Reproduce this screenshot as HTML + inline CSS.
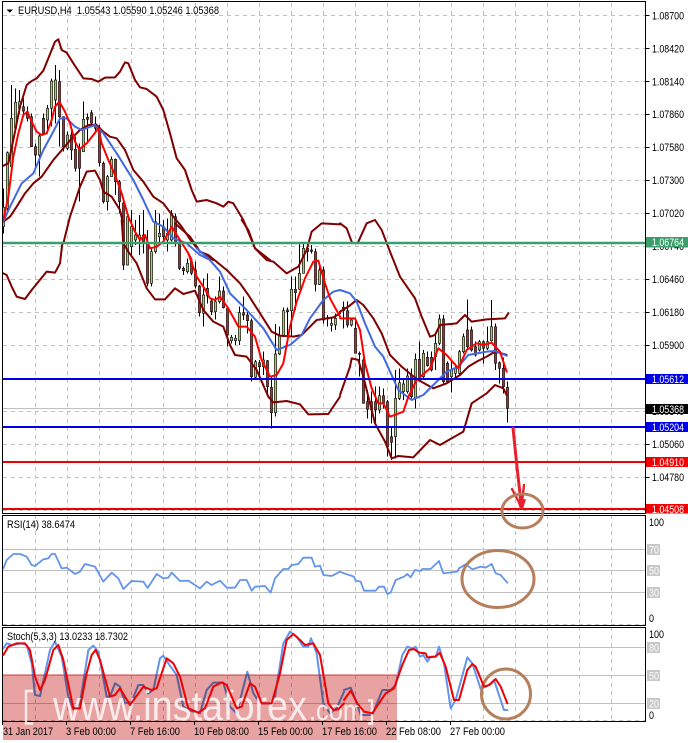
<!DOCTYPE html>
<html><head><meta charset="utf-8"><style>
html,body{margin:0;padding:0;background:#fff;width:688px;height:743px;overflow:hidden}
svg{display:block}
text{font-family:"Liberation Sans",sans-serif;font-size:11px;fill:#000}
.m{stroke-linejoin:round;stroke-linecap:round;fill:none}
.g{fill:#a6dc2e;stroke-width:2;shape-rendering:auto}
.r{fill:#e01818;stroke-width:2;shape-rendering:auto}
</style></head><body>
<svg width="688" height="743" viewBox="0 0 688 743" xmlns="http://www.w3.org/2000/svg">
<rect width="688" height="743" fill="#fff"/>
<!-- grid -->
<path fill="none" stroke="#c0c0c0" stroke-dasharray="4 4" d="M35.5 3V721M67.5 3V721M99.5 3V721M131.5 3V721M163.5 3V721M195.5 3V721M227.5 3V721M259.5 3V721M291.5 3V721M323.5 3V721M355.5 3V721M387.5 3V721M419.5 3V721M451.5 3V721M483.5 3V721M515.5 3V721M547.5 3V721M579.5 3V721M611.5 3V721"/>
<path fill="none" stroke="#c0c0c0" stroke-dasharray="4 4" d="M3 15.5H645M3 48.5H645M3 81.5H645M3 114.5H645M3 147.5H645M3 180.5H645M3 213.5H645M3 246.5H645M3 279.5H645M3 312.5H645M3 345.5H645M3 378.5H645M3 411.5H645M3 444.5H645M3 477.5H645M3 510.5H645M3 624.5H645M3 720.5H645"/>
<path fill="none" stroke="#c0c0c0" d="M3 408.5H645M3 549.5H645M3 570.5H645M3 592.5H645M3 647.5H645M3 675.5H645M3 703.5H645"/>
<!-- candles -->
<g shape-rendering="crispEdges">
<g transform="scale(.33333)" stroke="#000" stroke-width="3">
<path fill="none" d="M10.5 565V700M22.5 455V640M34.5 255V500M46.5 265V390M58.5 270V340M70.5 295V350M82.5 320V365M94.5 340V440M106.5 430V510M118.5 400V530M130.5 340V405M142.5 315V400M154.5 235V380M166.5 195V370M178.5 210V440M190.5 350V455M202.5 395V450M214.5 395V480M226.5 410V515M238.5 430V605M250.5 305V455M262.5 340V430M274.5 330V375M286.5 350V395M298.5 375V500M310.5 485V610M322.5 525V632M334.5 470V530M346.5 475V585M358.5 540V640"/>
<path class="g" d="M7.5 622h6v58h-6zM19.5 458h6v167h-6zM31.5 355h6v145h-6zM43.5 307h6v78h-6zM55.5 305h6v20h-6zM115.5 408h6v57h-6zM139.5 325h6v35h-6zM151.5 243h6v82h-6zM163.5 240h6v60h-6zM199.5 405h6v40h-6zM247.5 358h6v97h-6zM319.5 530h6v75h-6zM331.5 478h6v52h-6z"/>
<path class="r" d="M67.5 320h6v13h-6zM79.5 335h6v20h-6zM91.5 350h6v90h-6zM103.5 440h6v25h-6zM127.5 355h6v45h-6zM175.5 245h6v105h-6zM187.5 350h6v90h-6zM211.5 405h6v45h-6zM223.5 448h6v57h-6zM235.5 447h6v58h-6zM259.5 352h6v6h-6zM271.5 338h6v32h-6zM283.5 372h6v13h-6zM295.5 390h6v98h-6zM307.5 490h6v115h-6zM343.5 478h6v67h-6zM355.5 545h6v60h-6z"/>
</g>
<g transform="translate(0,220) scale(.33333)" stroke="#000" stroke-width="3">
<path fill="none" d="M370.5 -60V150M382.5 -25V135M394.5 -30V110M406.5 0V75M418.5 -15V105M430.5 -30V100M442.5 30V200M454.5 85V200M466.5 -30V100M478.5 -20V75M490.5 0V65M502.5 -5V95M514.5 -30V65M526.5 -20V80M538.5 60V150M550.5 140V165M562.5 115V160M574.5 115V165M586.5 125V205M598.5 195V290M610.5 175V320M622.5 160V250M634.5 235V285M646.5 230V298M658.5 170V250M670.5 200V265M682.5 260V380M694.5 345V370M706.5 345V375M718.5 260V375M730.5 230V300M742.5 270V340M754.5 295V485M766.5 420V480M778.5 420V475M790.5 395V465M802.5 420V530M814.5 470V625M826.5 312V590M838.5 320V405M850.5 262V350M862.5 262V355M874.5 170V350M886.5 170V270M898.5 70V210M910.5 70V160M922.5 70V125M934.5 75V100M946.5 85V215M958.5 135V195M970.5 140V310M982.5 285V320M994.5 295V335M1006.5 280V330"/>
<path class="g" d="M379.5 -10h6v145h-6zM391.5 20h6v60h-6zM403.5 45h6v15h-6zM415.5 45h6v10h-6zM451.5 95h6v95h-6zM463.5 5h6v90h-6zM475.5 40h6v10h-6zM499.5 40h6v20h-6zM511.5 -20h6v80h-6zM559.5 130h6v25h-6zM607.5 225h6v55h-6zM643.5 245h6v30h-6zM655.5 213h6v32h-6zM691.5 352h6v10h-6zM703.5 355h6v7h-6zM715.5 278h6v84h-6zM763.5 425h6v47h-6zM787.5 420h6v20h-6zM823.5 402h6v176h-6zM835.5 348h6v54h-6zM847.5 272h6v78h-6zM871.5 208h6v64h-6zM895.5 160h6v48h-6zM907.5 85h6v75h-6zM955.5 150h6v43h-6zM991.5 310h6v6h-6zM1003.5 295h6v20h-6z"/>
<path class="r" d="M367.5 -51h6v186h-6zM427.5 45h6v20h-6zM439.5 70h6v120h-6zM487.5 20h6v30h-6zM523.5 -10h6v80h-6zM535.5 70h6v75h-6zM547.5 145h6v7h-6zM571.5 125h6v35h-6zM583.5 150h6v48h-6zM595.5 198h6v80h-6zM619.5 205h6v23h-6zM631.5 243h6v32h-6zM667.5 213h6v50h-6zM679.5 265h6v80h-6zM727.5 278h6v7h-6zM739.5 285h6v17h-6zM751.5 302h6v168h-6zM775.5 428h6v12h-6zM799.5 422h6v78h-6zM811.5 502h6v76h-6zM859.5 270h6v5h-6zM883.5 208h6v10h-6zM919.5 85h6v10h-6zM931.5 90h6v4h-6zM943.5 95h6v98h-6zM967.5 150h6v150h-6zM979.5 293h6v4h-6z"/>
</g>
<g transform="translate(340,220) scale(.33333)" stroke="#000" stroke-width="3">
<path fill="none" d="M10.5 245V325M22.5 245V322M34.5 295V320M46.5 295V400M58.5 395V470M70.5 395V550M82.5 510V595M94.5 515V610M106.5 500V615M118.5 500V580M130.5 505V565M142.5 540V710M154.5 620V720M166.5 450V715M178.5 445V540M190.5 480V540M202.5 445V520M214.5 445V535M226.5 400V565M238.5 365V480M250.5 390V475M262.5 395V440M274.5 395V455M286.5 345V450M298.5 283V375M310.5 285V490M322.5 425V490M334.5 425V518M346.5 430V480M358.5 390V465M370.5 340V400M382.5 238V385M394.5 320V395M406.5 365V410M418.5 360V395M430.5 362V430M442.5 320V390M454.5 240V365M466.5 310V450M478.5 425V490M490.5 412V520M502.5 485V607"/>
<path class="g" d="M31.5 300h6v15h-6zM115.5 527h6v43h-6zM163.5 535h6v115h-6zM175.5 488h6v47h-6zM187.5 492h6v23h-6zM199.5 468h6v47h-6zM223.5 418h6v117h-6zM247.5 400h6v70h-6zM283.5 370h6v40h-6zM295.5 297h6v73h-6zM331.5 450h6v20h-6zM343.5 445h6v15h-6zM355.5 395h6v65h-6zM367.5 350h6v45h-6zM415.5 365h6v25h-6zM439.5 365h6v20h-6zM451.5 320h6v42h-6z"/>
<path class="r" d="M7.5 262h6v10h-6zM19.5 272h6v43h-6zM43.5 325h6v75h-6zM55.5 400h6v3h-6zM67.5 420h6v130h-6zM79.5 545h6v23h-6zM91.5 545h6v25h-6zM103.5 545h6v25h-6zM127.5 527h6v23h-6zM139.5 545h6v135h-6zM151.5 650h6v17h-6zM211.5 465h6v65h-6zM235.5 418h6v57h-6zM259.5 412h6v25h-6zM271.5 412h6v38h-6zM307.5 297h6v188h-6zM319.5 430h6v55h-6zM379.5 330h6v50h-6zM391.5 330h6v60h-6zM403.5 380h6v25h-6zM427.5 365h6v20h-6zM463.5 320h6v110h-6zM475.5 428h6v17h-6zM487.5 445h6v55h-6zM499.5 502h6v63h-6z"/>
</g>
</g>
<!-- bollinger -->
<g class="m" stroke="#800000" stroke-width="6" transform="scale(.33333)">
<path d="M10 497L25 490L40 420L60 320L80 255L95 243L110 235L130 212L145 175L165 125L175 118L185 150L200 158L220 190L250 235L275 237L295 245L315 233L345 232L360 215L375 187L385 190L405 240L420 262L440 267L470 290L490 330L510 400L530 475L555 510L575 570L590 605L620 600L650 610L670 620L685 605L700 610L730 660L765 745L810 780"/>
<path d="M10 665L30 650L50 620L75 580L100 550L125 530L160 480L190 445L215 415L240 390L265 375L290 375L310 395L330 410L350 415L375 450L400 510L430 545L460 590L490 610L520 650L545 680L575 725L600 755L640 780"/>
<path d="M190 730L210 650L240 560L260 515L285 512L300 540L310 575L335 590L360 630L368 665"/>
</g>
<g class="m" stroke="#800000" stroke-width="6" transform="translate(0,220) scale(.33333)">
<path d="M725 0L745 30L765 85L800 120L820 125L860 160L895 140L920 90L935 35L965 10L1020 13"/>
<path d="M525 10L570 50L600 95L625 105L680 150L720 190L745 225L780 280L815 335L840 347L880 350L905 345L925 325L950 300L1000 292L1020 280"/>
<path d="M10 160L20 165L35 200L50 230L75 237L95 210L140 155L165 158L180 130L187 70"/>
<path d="M365 0L370 70L385 95L410 130L440 205L465 238L495 238L525 205L550 222L585 212L610 270L640 305L670 320L690 375L705 405L740 410L770 450L805 530L820 547L860 543L900 553L925 583L985 582L1020 530"/>
</g>
<g class="m" stroke="#800000" stroke-width="6" transform="translate(340,220) scale(.33333)">
<path d="M0 10L20 25L35 65M55 65L80 10L105 0L125 30L150 95L180 170L225 235L245 290L270 350L285 345L300 315L350 310L375 285L395 305L440 298L495 295L505 280"/>
<path d="M0 275L25 260L50 240L70 255L100 295L125 340L150 405L185 440L215 465L235 480L280 505L320 490L360 465L385 440L410 425L440 410L460 398L475 397L500 405"/>
<path d="M0 525L30 440L35 415L55 420L70 470L105 610L135 665L155 715L175 708L220 712L270 660L300 675L370 635L395 550L440 520L465 495L490 505L500 525"/>
</g>
<!-- blue MA -->
<g class="m" stroke="#4169e1" stroke-width="6">
<path transform="scale(.33333)" d="M10 665L30 620L65 550L100 520L130 450L160 395L180 355L200 355L225 380L245 390L285 375L310 400L350 460L400 540L430 600L460 665L490 680L520 715L560 730L600 765L630 780"/>
<path transform="translate(0,220) scale(.33333)" d="M590 85L625 115L660 155L690 220L740 270L790 325L830 390L870 375L905 345L930 295L970 240L1000 215L1020 210"/>
<path transform="translate(340,220) scale(.33333)" d="M0 210L30 220L50 245L75 310L105 380L130 410L175 510L215 540L250 525L295 480L320 455L355 440L385 405L440 395L465 393L500 407"/>
</g>
<!-- red MA -->
<g class="m" stroke="#ff0000" stroke-width="6">
<path transform="scale(.33333)" d="M10 660L25 590L40 470L55 400L70 345L82 335L95 365L110 395L125 405L140 400L155 360L165 320L178 305L195 335L210 370L225 425L238 448L260 430L280 405L295 385L305 430L325 480L345 525L365 580L385 650L405 695L420 720L435 705L450 745L470 740L490 725L515 680L540 720L565 760L575 780"/>
<path transform="translate(0,220) scale(.33333)" d="M565 100L590 170L610 200L630 235L645 240L660 230L685 265L715 320L740 320L765 350L785 420L810 470L830 465L850 430L870 320L890 245L915 175L940 125L955 122L975 190L990 235L1020 290"/>
<path transform="translate(340,220) scale(.33333)" d="M0 295L45 295L60 330L75 430L95 505L115 550L130 550L150 590L190 575L205 530L230 480L270 445L295 385L320 405L355 445L380 390L410 370L430 375L455 368L480 395L500 455"/>
</g>
<!-- horizontal levels -->
<path fill="none" stroke="#3a9f6b" stroke-width="2.4" d="M3 243H646"/>
<path fill="none" stroke="#0000e6" stroke-width="2" d="M3 379H646M3 427H646"/>
<path fill="none" stroke="#f00000" stroke-width="2" d="M3 462H646M3 509H646"/>
<!-- arrow -->
<path class="m" stroke="#e8202e" stroke-width="3" d="M513 428L517 467L521.5 507"/>
<path class="m" stroke="#e8202e" stroke-width="2.4" d="M512 489L521.5 507L524 485"/>
<path fill="#e8202e" d="M517 500L526 499L523 509L520 509z"/>
<!-- RSI -->
<g class="m" stroke="#6495ed" stroke-width="5.4">
<path transform="translate(0,500) scale(.33333)" d="M10 205L20 180L40 162L60 162L80 170L95 195L105 198L130 178L145 175L155 162L165 162L185 205L200 203L225 222L240 215L255 192L285 200L310 245L335 218L355 235L370 267L395 243L430 245L443 264L470 222L490 235L505 233L515 218L540 243L565 242L600 265L620 245L635 255L660 242L680 263L705 263L720 240L740 240L755 272L765 260L795 258L812 278L825 235L850 207L865 207L875 195L895 192L910 173L935 173L945 200L960 197L970 225L995 228L1020 215L1032 220"/>
<path transform="translate(344,500) scale(.33333)" d="M0 220L30 230L35 242L50 245L60 272L95 272L105 260L120 260L130 282L140 278L155 240L180 230L190 222L200 232L213 210L230 213L235 207L260 207L285 183L298 220L340 215L345 205L365 193L385 208L410 200L425 203L443 192L455 220L470 225L490 248"/>
</g>
<!-- Stoch blue -->
<g class="m" stroke="#6495ed" stroke-width="6">
<path transform="translate(0,500) scale(.33333)" d="M10 445L20 430L35 435L65 430L80 435L95 490L105 585L120 588L135 520L150 450L165 425L185 470L205 590L220 628L240 610L265 450L280 437L295 455L320 590L330 590L345 550L360 560L375 610L395 605L415 555L430 555L445 580L460 570L480 475L490 467L505 490L530 525L550 620L570 632L600 640L620 570L640 548L670 548L690 620L710 640L742 515L760 580L780 610L810 610L825 590L850 430L870 395L890 410L910 440L925 440L933 415L950 460L970 610L990 640L1010 625L1032 575"/>
<path transform="translate(344,500) scale(.33333)" d="M0 570L20 563L35 600L50 645L85 645L115 570L140 570L155 555L175 465L190 440L205 445L215 440L228 470L238 465L250 485L260 470L275 470L285 440L300 490L320 625L335 600L370 472L385 490L410 567L440 553L450 540L480 630L490 630"/>
</g>
<!-- panel borders -->
<path fill="none" stroke="#000" d="M2.5 1.5H645.5V513.5H2.5ZM2.5 515.5H645.5V625.5H2.5ZM2.5 627.5H645.5V721.5H2.5Z"/>
<path fill="none" stroke="#000" d="M645.5 15.5h4M645.5 48.5h4M645.5 81.5h4M645.5 114.5h4M645.5 147.5h4M645.5 180.5h4M645.5 213.5h4M645.5 279.5h4M645.5 312.5h4M645.5 345.5h4M645.5 444.5h4M645.5 477.5h4M2.5 721V725M66.5 721V725M130.5 721V725M194.5 721V725M258.5 721V725M322.5 721V725M386.5 721V725M450.5 721V725"/>
<!-- price labels -->
<g>
<text x="652" y="19.5" textLength="32" lengthAdjust="spacingAndGlyphs">1.08700</text>
<text x="652" y="52.5" textLength="32" lengthAdjust="spacingAndGlyphs">1.08420</text>
<text x="652" y="85.5" textLength="32" lengthAdjust="spacingAndGlyphs">1.08140</text>
<text x="652" y="118" textLength="32" lengthAdjust="spacingAndGlyphs">1.07860</text>
<text x="652" y="151" textLength="32" lengthAdjust="spacingAndGlyphs">1.07580</text>
<text x="652" y="184" textLength="32" lengthAdjust="spacingAndGlyphs">1.07300</text>
<text x="652" y="217" textLength="32" lengthAdjust="spacingAndGlyphs">1.07020</text>
<text x="652" y="250" textLength="32" lengthAdjust="spacingAndGlyphs">1.06740</text>
<text x="652" y="283" textLength="32" lengthAdjust="spacingAndGlyphs">1.06460</text>
<text x="652" y="316" textLength="32" lengthAdjust="spacingAndGlyphs">1.06180</text>
<text x="652" y="349" textLength="32" lengthAdjust="spacingAndGlyphs">1.05900</text>
<text x="652" y="448" textLength="32" lengthAdjust="spacingAndGlyphs">1.05060</text>
<text x="652" y="481" textLength="32" lengthAdjust="spacingAndGlyphs">1.04780</text>
<text x="652" y="415" textLength="32" lengthAdjust="spacingAndGlyphs">1.05340</text>
<rect x="646" y="237" width="42" height="10.5" fill="#3a9f6b"/>
<text x="652" y="246" textLength="32" lengthAdjust="spacingAndGlyphs" style="fill:#fff">1.06764</text>
<rect x="646" y="374" width="42" height="10" fill="#0000e6"/>
<text x="652" y="383" textLength="32" lengthAdjust="spacingAndGlyphs" style="fill:#fff">1.05612</text>
<rect x="646" y="404" width="42" height="10" fill="#000"/>
<text x="652" y="413" textLength="32" lengthAdjust="spacingAndGlyphs" style="fill:#fff">1.05368</text>
<rect x="646" y="422" width="42" height="10" fill="#0000e6"/>
<text x="652" y="431" textLength="32" lengthAdjust="spacingAndGlyphs" style="fill:#fff">1.05204</text>
<rect x="646" y="457" width="42" height="10" fill="#f00000"/>
<text x="652" y="466" textLength="32" lengthAdjust="spacingAndGlyphs" style="fill:#fff">1.04910</text>
<rect x="646" y="504" width="42" height="9.5" fill="#f00000"/>
<text x="652" y="513" textLength="32" lengthAdjust="spacingAndGlyphs" style="fill:#fff">1.04508</text>
</g>
<!-- RSI / stoch scale -->
<g>
<text x="649" y="526" textLength="15" lengthAdjust="spacingAndGlyphs">100</text>
<rect x="647" y="544" width="13" height="11" fill="#c8c8c8"/><text x="649" y="553.5" textLength="10" lengthAdjust="spacingAndGlyphs" style="fill:#fff">70</text>
<rect x="647" y="565" width="13" height="11" fill="#c8c8c8"/><text x="649" y="574.5" textLength="10" lengthAdjust="spacingAndGlyphs" style="fill:#fff">50</text>
<rect x="647" y="587" width="13" height="11" fill="#c8c8c8"/><text x="649" y="596.5" textLength="10" lengthAdjust="spacingAndGlyphs" style="fill:#fff">30</text>
<text x="649" y="622" textLength="5" lengthAdjust="spacingAndGlyphs">0</text>
<text x="649" y="638" textLength="15" lengthAdjust="spacingAndGlyphs">100</text>
<rect x="647" y="642" width="13" height="11" fill="#c8c8c8"/><text x="649" y="651.5" textLength="10" lengthAdjust="spacingAndGlyphs" style="fill:#fff">80</text>
<rect x="647" y="670" width="13" height="11" fill="#c8c8c8"/><text x="649" y="679.5" textLength="10" lengthAdjust="spacingAndGlyphs" style="fill:#fff">50</text>
<rect x="647" y="698" width="13" height="11" fill="#c8c8c8"/><text x="649" y="707.5" textLength="10" lengthAdjust="spacingAndGlyphs" style="fill:#fff">20</text>
<text x="649" y="719" textLength="5" lengthAdjust="spacingAndGlyphs">0</text>
</g>
<!-- headers -->
<path d="M6.5 9.5h6.5l-3.2 3.2z" fill="#000"/>
<text x="18" y="14" textLength="201" lengthAdjust="spacingAndGlyphs" xml:space="preserve">EURUSD,H4  1.05543 1.05590 1.05246 1.05368</text>
<text x="7" y="528" textLength="68" lengthAdjust="spacingAndGlyphs">RSI(14) 38.6474</text>
<text x="7" y="640" textLength="121" lengthAdjust="spacingAndGlyphs">Stoch(5,3,3) 13.0233 18.7302</text>
<!-- time axis -->
<g>
<text x="3" y="735" textLength="50" lengthAdjust="spacingAndGlyphs">31 Jan 2017</text>
<text x="66" y="735" textLength="50" lengthAdjust="spacingAndGlyphs">3 Feb 00:00</text>
<text x="130" y="735" textLength="50" lengthAdjust="spacingAndGlyphs">7 Feb 16:00</text>
<text x="194" y="735" textLength="55" lengthAdjust="spacingAndGlyphs">10 Feb 08:00</text>
<text x="258" y="735" textLength="55" lengthAdjust="spacingAndGlyphs">15 Feb 00:00</text>
<text x="322" y="735" textLength="55" lengthAdjust="spacingAndGlyphs">17 Feb 16:00</text>
<text x="386" y="735" textLength="55" lengthAdjust="spacingAndGlyphs">22 Feb 08:00</text>
<text x="450" y="735" textLength="55" lengthAdjust="spacingAndGlyphs">27 Feb 00:00</text>
</g>
<!-- annotations -->
<g fill="none" stroke="#b57f5b" stroke-width="3">
<ellipse cx="522.5" cy="511" rx="20.5" ry="17"/>
<ellipse cx="498" cy="579" rx="36" ry="28.5"/>
<ellipse cx="506" cy="694" rx="24.5" ry="25"/>
</g>
<!-- watermark -->
<rect x="3" y="674" width="394" height="66" fill="#e8a2a2" style="mix-blend-mode:multiply"/>
<g style="opacity:.8">
<path fill="none" stroke="#fff" stroke-width="2.4" d="M33 691H26V723.5H33M368 700.5H372V723.5H368"/>
<text x="53" y="720" textLength="254" lengthAdjust="spacingAndGlyphs" style="font-size:42px;fill:#fff">www.instaforex</text>
<text x="309" y="720" textLength="55" lengthAdjust="spacingAndGlyphs" style="font-size:29px;fill:#fff">.com</text>
</g>
<!-- Stoch red, above the watermark -->
<g class="m" stroke="#f00000" stroke-width="6">
<path transform="translate(0,500) scale(.33333)" d="M10 465L25 440L50 430L75 430L90 450L105 530L120 570L135 540L160 450L175 435L190 480L220 625L240 625L260 520L275 465L287 450L300 480L330 590L345 585L360 565L390 615L430 560L455 570L470 565L500 475L520 490L540 530L565 625L595 638L615 625L640 560L665 547L680 555L710 625L725 620L750 550L765 560L785 610L815 610L840 520L860 420L880 402L900 420L915 435L940 430L960 465L985 610L1000 630L1015 628L1032 610"/>
<path transform="translate(344,500) scale(.33333)" d="M0 600L20 572L40 610L60 635L85 640L125 580L150 565L175 495L195 450L210 447L225 458L245 460L250 472L275 470L287 458L305 500L330 600L345 600L370 510L385 492L395 500L420 560L435 555L455 537L470 560L490 610"/>
</g>
</svg>
</body></html>
